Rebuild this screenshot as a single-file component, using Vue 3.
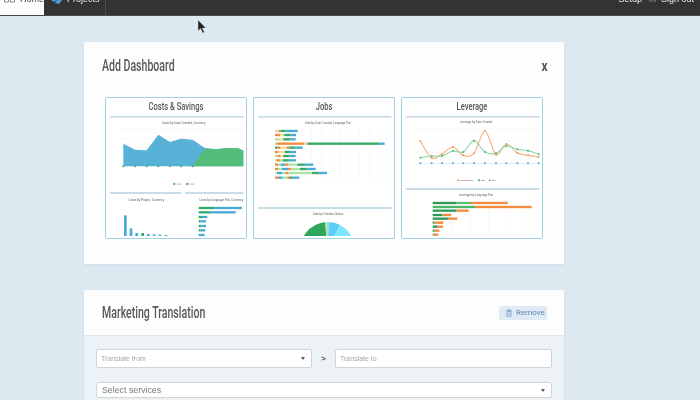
<script setup>
const BLUE = '#4aa9d6', GREEN = '#36ab66', ORANGE = '#f28a3f', LG = '#a9e6a4', LO = '#f8c9a0', Y = '#ecdf8e', DG = '#2f9a58'

const areaBlue = '70,223 70,155 105,173 140,175 175,128 210,150 243,140 278,143 313,167 347,172 381,168 415,169 430,176 430,223'
const areaGreen = '70,223 243,223 278,222 313,170 347,172 381,168 415,169 430,176 430,223'
const areaDots = [70,105,140,175,210,243,278]
const gridYs = [111,139,167,195,223]
const columns = [
  [72,370,BLUE],[89,409,BLUE],[106,423,BLUE],[124,423,GREEN],
  [141,426,BLUE],[158,427,BLUE],[176,428,BLUE],[194,429,BLUE]
]
const costRows = [
  [348,296,342,426],[361,296,330,407],[375,296,306,322],[388,296,302,318],
  [402,296,304,318],[415,296,302,316],[429,296,296,314]
]
const jobRows = [
  [117,[[75,80,LG],[80,86,LO],[86,92,ORANGE],[92,107,GREEN],[107,143,BLUE]]],
  [129,[[75,90,ORANGE],[90,97,Y],[97,103,LG],[103,122,GREEN],[122,138,BLUE]]],
  [142,[[75,84,LG],[84,92,LO],[92,100,Y],[100,122,GREEN],[122,137,BLUE]]],
  [155,[[75,80,LG],[80,162,ORANGE],[162,172,LO],[172,388,GREEN],[388,404,BLUE]]],
  [167,[[75,82,GREEN],[82,92,ORANGE],[92,110,Y],[110,118,ORANGE],[118,136,GREEN],[136,158,BLUE]]],
  [180,[[75,84,ORANGE],[84,92,LO],[92,104,Y],[104,122,GREEN],[122,138,BLUE]]],
  [192,[[75,82,LG],[82,92,ORANGE],[92,100,Y],[100,118,GREEN],[118,137,BLUE]]],
  [205,[[75,80,LG],[80,90,ORANGE],[90,98,LG],[98,118,GREEN],[118,138,BLUE]]],
  [218,[[75,84,ORANGE],[84,92,LG],[92,106,BLUE],[106,116,ORANGE],[116,142,LG],[142,166,GREEN],[166,190,BLUE]]],
  [231,[[75,84,ORANGE],[84,96,LG],[96,114,BLUE],[114,124,ORANGE],[124,150,LG],[150,172,GREEN],[172,197,BLUE]]],
  [243,[[75,81,Y],[81,96,BLUE],[96,106,LG],[106,116,ORANGE],[116,186,LG],[186,206,GREEN],[206,231,BLUE]]],
  [257,[[75,84,ORANGE],[84,98,BLUE],[98,112,LG],[112,120,ORANGE],[120,128,GREEN],[128,148,BLUE]]]
]
const jobGrid = [126,155,184,213,242,271,300,329,358,387,410]
const levX = [70,104,135,168,199,231,264,297,328,361,393,425]
const orangeY = [148,198,186,165,190,184,117,188,156,183,190,195]
const greenY = [197,192,192,177,180,146,180,184,162,172,176,187]
function smooth(xs, ys) {
  let d = `M${xs[0]},${ys[0]}`
  for (let i = 0; i < xs.length - 1; i++) {
    const p0 = Math.max(i - 1, 0), p3 = Math.min(i + 2, xs.length - 1)
    const c1x = xs[i] + (xs[i + 1] - xs[p0]) / 6, c1y = ys[i] + (ys[i + 1] - ys[p0]) / 6
    const c2x = xs[i + 1] - (xs[p3] - xs[i]) / 6, c2y = ys[i + 1] - (ys[p3] - ys[i]) / 6
    d += ` C${c1x},${c1y} ${c2x},${c2y} ${xs[i + 1]},${ys[i + 1]}`
  }
  return d
}
const orangeLine = smooth(levX, orangeY)
const greenLine = smooth(levX, greenY)
const levRows = [
  [333,[[107,178,DG],[178,222,'#58bd6f'],[222,332,ORANGE]]],
  [345,[[107,234,'#4cb56a'],[234,404,ORANGE]]],
  [356,[[107,178,DG],[178,215,ORANGE]]],
  [369,[[107,136,DG],[136,162,ORANGE]]],
  [380,[[107,155,DG],[155,181,ORANGE]]],
  [392,[[107,113,GREEN],[113,139,ORANGE]]],
  [404,[[107,122,DG],[122,138,ORANGE]]],
  [416,[[107,113,GREEN],[113,127,ORANGE]]],
  [428,[[107,110,GREEN],[110,124,ORANGE]]]
]
const levGrid = [165,220,275,330,385]
</script>

<template>
  <div class="page">
    <nav class="nav">
      <div class="nav-inner">
        <a class="tab active">
          <svg class="home-ico" viewBox="0 0 11 12"><path d="M.5 1h4v10h-4zM6.500 1h4v10h-4z" fill="none" stroke="#8a8a8a"/></svg>
          Home
        </a>
        <a class="tab projects">
          <svg class="proj-ico" viewBox="0 0 11 12"><path d="M0 8l4-3 2 3-3 2zM4 11l6-8 1 5-3 4z" fill="#4a9fd8"/></svg>
          Projects
        </a>
        <div class="spacer"></div>
        <a class="tool setup"><svg class="tool-ico" viewBox="0 0 6 11"><path d="M1 9l4-6" stroke="#777" stroke-width="2"/></svg>Setup</a>
        <a class="tool"><svg class="tool-ico box" viewBox="0 0 7 11"><rect x=".5" y="0" width="6" height="10" fill="none" stroke="#777"/></svg>Sign out</a>
      </div>
    </nav>

    <main class="content">
      <section class="card add">
        <header class="add-head">
          <h2 class="title">Add Dashboard</h2>
          <span class="close">x</span>
        </header>
        <div class="thumbs">
          <article class="thumb">
            <h3 class="thumb-title">Costs &amp; Savings</h3>
            <svg class="chart" viewBox="18 72 420 366">
              <rect x="30" y="71" width="400" height="6" fill="#c8dce6"/>
              <text x="251" y="95" class="t" textLength="131" lengthAdjust="spacingAndGlyphs">Costs by Date Created, Currency</text>
              <line v-for="y in gridYs" :key="y" x1="58" x2="430" :y1="y" :y2="y" stroke="#f1f3f4" stroke-width="1.5"/>
              <polygon :points="areaBlue" fill="#58b2d8"/>
              <polygon :points="areaGreen" fill="#54bd7a"/>
              <circle v-for="x in areaDots" :key="x" :cx="x" cy="223" r="3" fill="#36ab66"/>
              <circle cx="223" cy="276" r="3.500" fill="#4aa9d6"/><rect x="230" y="275" width="14" height="2.500" fill="#aaa"/>
              <circle cx="262" cy="276" r="3.500" fill="#36ab66"/><rect x="269" y="275" width="14" height="2.500" fill="#aaa"/>
              <rect x="30" y="300" width="215" height="6" fill="#c8dce6"/>
              <rect x="255" y="300" width="175" height="6" fill="#c8dce6"/>
              <text x="139" y="327" class="t" textLength="107" lengthAdjust="spacingAndGlyphs">Costs by Project, Currency</text>
              <text x="363" y="327" class="t" textLength="133" lengthAdjust="spacingAndGlyphs">Costs by Language Pair, Currency</text>
              <rect v-for="c in columns" :key="c[0]" :x="c[0]" :y="c[1]" width="8" :height="432 - c[1]" :fill="c[2]"/>
              <g v-for="r in costRows" :key="r[0]">
                <rect :x="r[1]" :y="r[0] - 3.500" :width="r[2] - r[1]" height="7" fill="#36ab66"/>
                <rect :x="r[2]" :y="r[0] - 3.500" :width="r[3] - r[2]" height="7" fill="#4aa9d6"/>
              </g>
            </svg>
          </article>

          <article class="thumb">
            <h3 class="thumb-title">Jobs</h3>
            <svg class="chart" viewBox="12 72 420 366">
              <rect x="24" y="71" width="400" height="6" fill="#c8dce6"/>
              <text x="234" y="95" class="t" textLength="138" lengthAdjust="spacingAndGlyphs">Jobs by Date Created, Language Pair</text>
              <line v-for="x in jobGrid" :key="x" :x1="x" :x2="x" y1="110" y2="262" stroke="#f1f3f4" stroke-width="1.5"/>
              <g v-for="r in jobRows" :key="r[0]">
                <rect v-for="s in r[1]" :key="s[0]" :x="s[0]" :y="r[0] - 3.500" :width="s[1] - s[0]" height="7" :fill="s[2]"/>
              </g>
              <rect x="24" y="345" width="400" height="6" fill="#c8dce6"/>
              <text x="234" y="370" class="t" textLength="91" lengthAdjust="spacingAndGlyphs">Jobs by Overdue, Status</text>
              <clipPath id="pie-clip"><rect x="12" y="372" width="420" height="60"/></clipPath>
              <g clip-path="url(#pie-clip)">
                <path d="M233 471L153 456A81 81 0 0 1 225 390.400Z" fill="#2fa65c"/>
                <path d="M233 471L225 390.400A81 81 0 0 1 236 390.100Z" fill="#a5e6ae"/>
                <path d="M233 471L236 390.100A81 81 0 0 1 270 399Z" fill="#5ccdf6"/>
                <path d="M233 471L270 399A81 81 0 0 1 314 471Z" fill="#7fe7fb"/>
              </g>
            </svg>
          </article>

          <article class="thumb">
            <h3 class="thumb-title">Leverage</h3>
            <svg class="chart" viewBox="15 72 420 366">
              <rect x="27" y="71" width="400" height="6" fill="#c8dce6"/>
              <text x="237" y="94" class="t" textLength="96" lengthAdjust="spacingAndGlyphs">Leverage by Date Created</text>
              <line v-for="y in [110,146,180,214]" :key="y" x1="60" x2="428" :y1="y" :y2="y" stroke="#f1f3f4" stroke-width="1.5"/>
              <path :d="orangeLine" fill="none" stroke="#f6b283" stroke-width="3.500"/>
              <path :d="greenLine" fill="none" stroke="#8fdaa8" stroke-width="3.500"/>
              <line x1="70" x2="425" y1="214" y2="214" stroke="#cbe6f2" stroke-width="2"/>
              <circle v-for="(x, i) in levX" :key="'o' + i" :cx="x" :cy="orangeY[i]" r="3" fill="#f49a5a"/>
              <circle v-for="(x, i) in levX" :key="'g' + i" :cx="x" :cy="greenY[i]" r="3" fill="#4fb976"/>
              <circle v-for="(x, i) in levX" :key="'b' + i" :cx="x" cy="214" r="3" fill="#4aa9d6"/>
              <circle cx="184" cy="265" r="3" fill="#f28a3f"/><rect x="190" y="264" width="38" height="2.500" fill="#aaa"/>
              <circle cx="246" cy="265" r="3" fill="#36ab66"/><rect x="252" y="264" width="12" height="2.500" fill="#aaa"/>
              <circle cx="278" cy="265" r="3" fill="#4aa9d6"/><rect x="284" y="264" width="12" height="2.500" fill="#aaa"/>
              <rect x="27" y="288" width="400" height="6" fill="#c8dce6"/>
              <text x="237" y="313" class="t" textLength="102" lengthAdjust="spacingAndGlyphs">Leverage by Language Pair</text>
              <line v-for="x in levGrid" :key="x" :x1="x" :x2="x" y1="325" y2="432" stroke="#f1f3f4" stroke-width="1.5"/>
              <g v-for="r in levRows" :key="r[0]">
                <rect v-for="s in r[1]" :key="s[0]" :x="s[0]" :y="r[0] - 3.500" :width="s[1] - s[0]" height="7" :fill="s[2]"/>
              </g>
            </svg>
          </article>
        </div>
      </section>

      <section class="card form">
        <header class="form-head">
          <h2 class="title">Marketing Translation</h2>
          <button class="remove">
            <svg class="trash" viewBox="0 0 10 12"><path d="M3.500 1.500V.5h3v1M.5 2h9M1.500 3.500h7V11.500h-7zM3.500 5.500v4M6.500 5.500v4" fill="none" stroke="#5f8fbd"/></svg>
            Remove
          </button>
        </header>
        <div class="form-body">
          <div class="lang-row">
            <div class="field from"><span>Translate from</span><i class="caret"></i></div>
            <span class="gt">&gt;</span>
            <div class="field to"><span>Translate to</span></div>
          </div>
          <div class="field services"><span>Select services</span><i class="caret"></i></div>
        </div>
      </section>
    </main>

    <svg class="cursor" viewBox="0 0 10 14"><path d="M1 0v11l2.600-2.400 2 4.400 1.800-.8-2-4.200H9z" fill="#222" stroke="#ddd" stroke-width=".5"/></svg>
  </div>
</template>

<style>
html, body { margin: 0; overflow: hidden; }
</style>

<style scoped>
.page {
  position: relative;
  width: 700px;
  height: 400px;
  overflow: hidden;
  background: #dce9f1;
  font-family: "Liberation Sans", Arial, sans-serif;
  filter: blur(0.5px);
}
.nav {
  height: 15px;
  background: #333333;
  border-bottom: 1px solid #4a4a4a;
  overflow: hidden;
  box-sizing: content-box;
}
.nav-inner {
  display: flex;
  height: 24px;
  margin-top: -6px;
  font-size: 9px;
  line-height: 10px;
}
.tab {
  display: flex;
  gap: 5px;
  color: #eee;
  box-sizing: border-box;
}
.tab.active {
  width: 44px;
  padding-left: 4px;
  background: #fdfdfd;
  color: #444;
}
.tab.projects {
  width: 62px;
  padding-left: 7px;
  border-right: 1px solid #4c4c4c;
}
.home-ico { width: 11px; height: 12px; margin-top: -3px; }
.proj-ico { width: 11px; height: 12px; margin-top: -2px; }
.spacer { flex: 1; }
.tool {
  display: flex;
  gap: 5px;
  margin-right: 6px;
  color: #eee;
}
.tool.setup { margin-right: 7px; gap: 7px; }
.tool-ico { width: 6px; height: 11px; margin-top: -3px; }
.tool-ico.box { width: 7px; }
.content {
  width: 480px;
  margin: 26px 0 0 84px;
}
.card {
  background: #fdfdfd;
  box-shadow: 0 1px 2px rgba(120, 150, 170, 0.15);
}
.add {
  height: 222px;
  padding: 0 21px;
  box-sizing: border-box;
}
.add-head {
  display: flex;
  justify-content: space-between;
  align-items: center;
  height: 55px;
  padding-bottom: 7px;
  box-sizing: border-box;
}
.title {
  display: inline-block;
  margin: 0;
  font-family: Roboto, sans-serif;
  font-size: 16px;
  font-weight: 500;
  line-height: 18px;
  white-space: nowrap;
  color: #54585c;
  transform: scaleX(0.66);
  transform-origin: left center;
}
.add-head .title { margin-left: -3px; }
.close {
  margin-right: -5px;
  font-family: Roboto, sans-serif;
  font-size: 14px;
  font-weight: 700;
  color: #555;
  transform: scaleX(0.85);
}
.thumbs {
  display: flex;
  gap: 6px;
}
.thumb {
  width: 142px;
  height: 142px;
  box-sizing: border-box;
  border: 1px solid #a0d0e4;
  border-radius: 2px;
  background: #fff;
  overflow: hidden;
}
.thumb-title {
  margin: 0;
  height: 18px;
  line-height: 17px;
  text-align: center;
  white-space: nowrap;
  font-family: Roboto, sans-serif;
  font-size: 10.500px;
  font-weight: 500;
  color: #54585c;
  transform: scaleX(0.72);
}
.chart {
  display: block;
  width: 140px;
  height: 122px;
}
.t {
  font-family: "Liberation Sans", sans-serif;
  font-size: 10.500px;
  fill: #555;
  text-anchor: middle;
}
.form {
  height: 120px;
  margin-top: 26px;
}
.form-head {
  display: flex;
  justify-content: space-between;
  align-items: center;
  height: 46px;
  padding: 0 17px 0 18px;
  box-sizing: border-box;
  border-bottom: 1px solid #dfe6ec;
}
.remove {
  display: flex;
  align-items: center;
  gap: 4px;
  flex: none;
  width: 48px;
  height: 14px;
  padding: 0 0 0 7px;
  border: 0;
  border-radius: 2px;
  background: #deeaf4;
  color: #6289b6;
  font: 8px Roboto, sans-serif;
  box-sizing: border-box;
}
.trash { width: 6px; height: 8px; flex: none; }
.form-body {
  height: 75px;
  padding: 13px 12px 0 12px;
  box-sizing: border-box;
  background: #edf2f7;
}
.lang-row {
  display: flex;
  align-items: center;
}
.field {
  display: flex;
  align-items: center;
  justify-content: space-between;
  height: 19px;
  padding: 0 5px 0 4px;
  box-sizing: border-box;
  border: 1px solid #d0d5d9;
  border-radius: 2px;
  background: #fff;
  color: #a4a8ac;
  font-size: 7px;
}
.from { width: 216px; }
.to { width: 217px; }
.gt {
  width: 23px;
  text-align: center;
  font-size: 8px;
  font-weight: 700;
  color: #555;
}
.services {
  height: 16px;
  margin-top: 14px;
  padding-left: 5px;
  color: #777;
  font-size: 8.800px;
}
.caret {
  width: 0;
  height: 0;
  margin-right: 1px;
  border: 2.500px solid transparent;
  border-top: 3px solid #555;
  border-bottom: 0;
}
.cursor {
  position: absolute;
  left: 197px;
  top: 20px;
  width: 10px;
  height: 14px;
}
</style>
